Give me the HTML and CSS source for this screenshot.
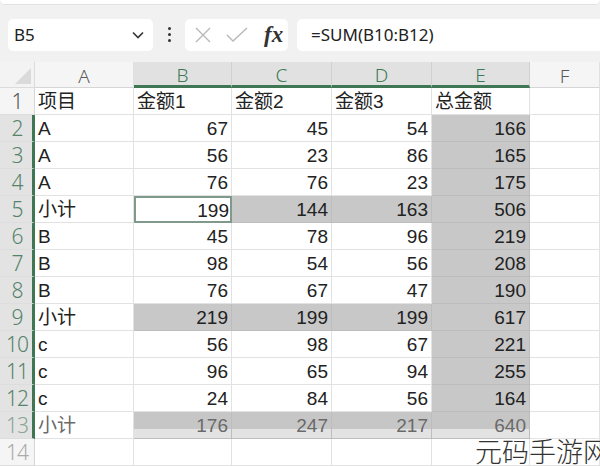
FILE: index.html
```html
<!DOCTYPE html>
<html lang="zh">
<head>
<meta charset="utf-8">
<link rel="stylesheet" href="styles.css">
</head>
<body>
<div class="topstrip"></div>
<div class="toolbar">
  <div class="namebox"><span class="nb-text">B5</span>
    <svg class="chev" width="14" height="10" viewBox="0 0 14 10"><path d="M2 2.5 L7 7.5 L12 2.5" fill="none" stroke="#333" stroke-width="1.6"/></svg>
  </div>
  <div class="dots"><span></span><span></span><span></span></div>
  <div class="fbtns">
    <svg width="20" height="20" viewBox="0 0 20 20"><path d="M3 3 L17 17 M17 3 L3 17" stroke="#b8b8b8" stroke-width="1.4" fill="none"/></svg>
    <svg width="24" height="20" viewBox="0 0 24 20"><path d="M2 10 L8 16 L22 3" stroke="#b8b8b8" stroke-width="1.4" fill="none"/></svg>
    <span class="fx">fx</span>
  </div>
  <div class="formula">=SUM(B10:B12)</div>
</div>
<div class="sheet">
  <div class="corner"></div>
  <div class="ch">A</div><div class="ch sel">B</div><div class="ch sel">C</div><div class="ch sel">D</div><div class="ch sel">E</div><div class="ch">F</div>

  <div class="rh">1</div><div class="c">项目</div><div class="c">金额1</div><div class="c">金额2</div><div class="c">金额3</div><div class="c">总金额</div><div class="c"></div>
  <div class="rh sel">2</div><div class="c">A</div><div class="c n">67</div><div class="c n">45</div><div class="c n">54</div><div class="c n g">166</div><div class="c"></div>
  <div class="rh sel">3</div><div class="c">A</div><div class="c n">56</div><div class="c n">23</div><div class="c n">86</div><div class="c n g">165</div><div class="c"></div>
  <div class="rh sel">4</div><div class="c">A</div><div class="c n">76</div><div class="c n">76</div><div class="c n">23</div><div class="c n g">175</div><div class="c"></div>
  <div class="rh sel">5</div><div class="c">小计</div><div class="c n active">199</div><div class="c n g">144</div><div class="c n g">163</div><div class="c n g">506</div><div class="c"></div>
  <div class="rh sel">6</div><div class="c">B</div><div class="c n">45</div><div class="c n">78</div><div class="c n">96</div><div class="c n g">219</div><div class="c"></div>
  <div class="rh sel">7</div><div class="c">B</div><div class="c n">98</div><div class="c n">54</div><div class="c n">56</div><div class="c n g">208</div><div class="c"></div>
  <div class="rh sel">8</div><div class="c">B</div><div class="c n">76</div><div class="c n">67</div><div class="c n">47</div><div class="c n g">190</div><div class="c"></div>
  <div class="rh sel">9</div><div class="c">小计</div><div class="c n g">219</div><div class="c n g">199</div><div class="c n g">199</div><div class="c n g">617</div><div class="c"></div>
  <div class="rh sel">10</div><div class="c">c</div><div class="c n">56</div><div class="c n">98</div><div class="c n">67</div><div class="c n g">221</div><div class="c"></div>
  <div class="rh sel">11</div><div class="c">c</div><div class="c n">96</div><div class="c n">65</div><div class="c n">94</div><div class="c n g">255</div><div class="c"></div>
  <div class="rh sel">12</div><div class="c">c</div><div class="c n">24</div><div class="c n">84</div><div class="c n">56</div><div class="c n g">164</div><div class="c"></div>
  <div class="rh sel ghost">13</div><div class="c ghost">小计</div><div class="c n g ghost">176</div><div class="c n g ghost">247</div><div class="c n g ghost">217</div><div class="c n g ghost">640</div><div class="c"></div>
  <div class="rh dim">14</div><div class="c"></div><div class="c"></div><div class="c"></div><div class="c"></div><div class="c"></div><div class="c"></div>
</div>
<div class="watermark">元码手游网</div>
</body>
</html>
```
FILE: styles.css
```css
html, body {
  margin: 0;
  padding: 0;
}
body {
  width: 600px;
  height: 466px;
  overflow: hidden;
  background: #f1f1f1;
  font-family: "Liberation Sans", "Noto Sans CJK SC", sans-serif;
  color: #222;
  position: relative;
}
.topstrip {
  height: 4px;
  background: #fff;
  border-bottom: 1px solid #e2e2e2;
  border-radius: 0 0 6px 6px;
}
.toolbar {
  height: 57px;
  display: flex;
  align-items: center;
  padding: 2px 0 0 8px;
  box-sizing: border-box;
}
.namebox {
  width: 145px;
  height: 32px;
  background: #fff;
  border-radius: 5px;
  display: flex;
  align-items: center;
  justify-content: space-between;
  padding: 0 8px 0 6px;
  box-sizing: border-box;
}
.nb-text {
  font-size: 17px;
  font-family: "Noto Sans", sans-serif;
  color: #222;
}
.dots {
  width: 32px;
  display: flex;
  flex-direction: column;
  align-items: center;
  gap: 3px;
}
.dots span {
  width: 3px;
  height: 3px;
  background: #333;
  border-radius: 50%;
}
.fbtns {
  width: 103px;
  height: 32px;
  background: #fff;
  border-radius: 5px;
  display: flex;
  align-items: center;
  gap: 12px;
  padding-left: 8px;
  box-sizing: border-box;
}
.fx {
  font-family: "Liberation Serif", "DejaVu Serif", serif;
  font-style: italic;
  font-weight: bold;
  font-size: 23px;
  color: #333;
  margin-left: 3px;
}
.formula {
  flex: 1;
  margin-left: 9px;
  height: 32px;
  background: #fff;
  border-radius: 5px 0 0 5px;
  display: flex;
  align-items: center;
  padding-left: 14px;
  font-family: "Noto Sans", sans-serif;
  font-size: 17px;
  color: #222;
}
.sheet {
  display: grid;
  grid-template-columns: 35px 99px 98px 100px 100px 98px 70px;
  grid-template-rows: 26px repeat(14, 27px);
  background: #fff;
}
.corner {
  background: #f3f3f3;
  border-bottom: 1px solid #dcdcdc;
  border-right: 1px solid #dcdcdc;
  position: relative;
}
.corner::after {
  content: "";
  position: absolute;
  right: 3px;
  bottom: 3px;
  border-left: 16px solid transparent;
  border-bottom: 16px solid #dadada;
}
.ch {
  background: #f5f5f5;
  border-bottom: 1px solid #d6d6d6;
  border-right: 1px solid #e0e0e0;
  display: flex;
  align-items: center;
  justify-content: center;
  font-size: 19px;
  color: #5a5a5a;
  font-family: "Noto Sans", sans-serif;
  font-weight: 300;
  padding-top: 2px;
}
.ch.sel {
  background: #e1e1e1;
  color: #3c7a56;
  border-bottom: 3px solid #3f7653;
  border-right: 1px solid #d0d0d0;
}
.rh {
  background: #f5f5f5;
  border-bottom: 1px solid #dddddd;
  border-right: 1px solid #d6d6d6;
  display: flex;
  align-items: center;
  justify-content: center;
  font-size: 21px;
  color: #555;
  font-family: "Noto Sans", sans-serif;
  font-weight: 300;
  letter-spacing: -1px;
}
.rh.sel {
  background: #e3e3e3;
  color: #55836a;
  border-right: 3px solid #3f7653;
  padding-left: 2px;
}
.rh.dim {
  color: #aaa;
}
.c {
  border-right: 1px solid #e2e2e2;
  border-bottom: 1px solid #e2e2e2;
  font-size: 19px;
  line-height: 28px;
  padding: 0 3px;
  white-space: nowrap;
  overflow: hidden;
}
.c.n {
  text-align: right;
}
.c.g {
  background: #c8c8c8;
  border-right-color: #bdbdbd;
  border-bottom-color: #bdbdbd;
}
.c.active {
  border: 2px solid #7f9a8a;
  line-height: 25px;
  padding-right: 1px;
}
.ghost {
  color: #6a6a6a;
}
.c.g.ghost {
  background: linear-gradient(#c6c6c6 0, #c6c6c6 64%, #e3e3e3 64%, #e3e3e3 100%);
}
.rh.ghost {
  color: #8aa696;
}
.watermark {
  position: absolute;
  left: 475px;
  top: 431px;
  font-family: "Noto Sans CJK SC", sans-serif;
  font-weight: 300;
  font-size: 27px;
  color: #333;
  white-space: nowrap;
  text-shadow: 0 0 3px #fff, 0 0 3px #fff;
}
```
